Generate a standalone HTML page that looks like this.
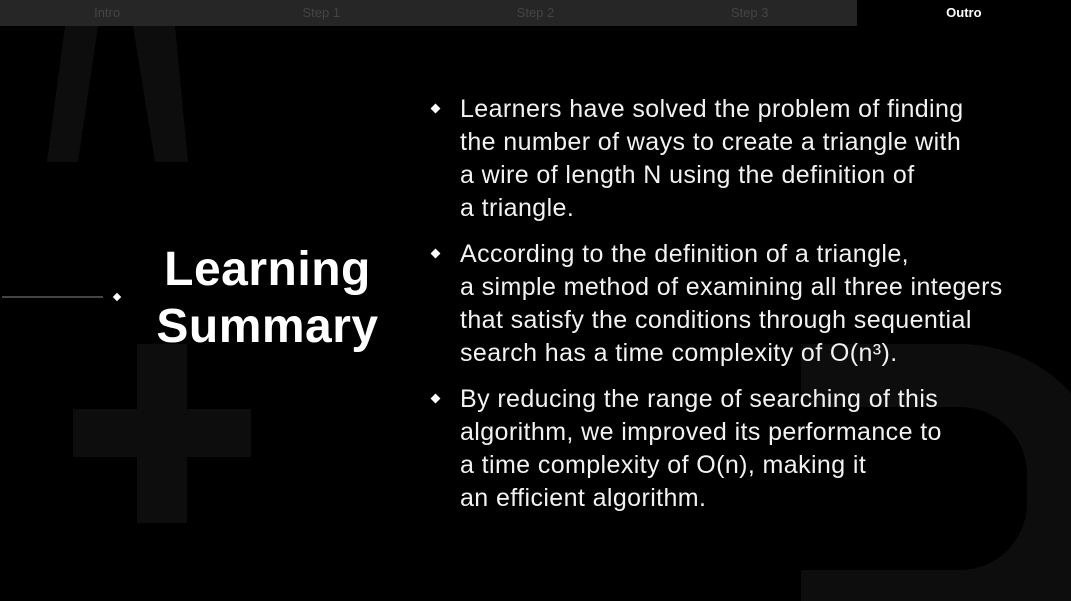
<!DOCTYPE html>
<html><head><meta charset="utf-8"><style>
body{margin:0;width:1071px;height:601px;background:#000;overflow:hidden;position:relative;font-family:"Liberation Sans",sans-serif}
.tabs{position:absolute;left:0;top:0;width:1071px;height:26px;display:flex}
.tab{width:214.2px;height:26px;background:#262626;color:#444;font-size:13px;line-height:26px;text-align:center}
.tab.on{background:#000;color:#fff;font-weight:bold}
.title{position:absolute;left:120px;top:241px;width:295px;text-align:center;color:#fff;font-weight:bold;font-size:48px;line-height:57px;letter-spacing:0.5px}
.list{position:absolute;left:460px;top:93px;color:#f2f2f2;font-size:25px;line-height:33px;letter-spacing:0.4px;width:600px}
.list p{margin:0 0 13px 0;position:relative;white-space:nowrap}
.list p:before{content:"";position:absolute;left:-28px;top:12px;width:7px;height:7px;background:#fff;transform:rotate(45deg)}
</style></head><body>
<svg style="position:absolute;left:0;top:0" width="1071" height="601">
<polygon points="65,26 98,26 78,162 47,162" fill="#0d0d0d"/>
<polygon points="133,26 175,26 188,162 155,162" fill="#0d0d0d"/>
<rect x="137" y="344" width="50" height="179" fill="#0d0d0d"/>
<rect x="73" y="409" width="178" height="48" fill="#0d0d0d"/>
<path d="M801,344 H960 A150,150 0 0 1 1110,494 V601 H801 V570 H960 A67,67 0 0 0 1027,503 V474 A67,67 0 0 0 960,407 H801 Z" fill="#0d0d0d"/>
<line x1="2" y1="297" x2="103" y2="297" stroke="#888" stroke-width="1"/>
<rect x="114" y="294" width="6" height="6" fill="#fff" transform="rotate(45 117 297)"/>
</svg>
<div class="tabs"><div class="tab">Intro</div><div class="tab">Step 1</div><div class="tab">Step 2</div><div class="tab">Step 3</div><div class="tab on">Outro</div></div>
<div class="title">Learning<br>Summary</div>
<div class="list">
<p>Learners have solved the problem of finding<br>the number of ways to create a triangle with<br>a wire of length N using the definition of<br>a triangle.</p>
<p>According to the definition of a triangle,<br>a simple method of examining all three integers<br>that satisfy the conditions through sequential<br>search has a time complexity of O(n³).</p>
<p>By reducing the range of searching of this<br>algorithm, we improved its performance to<br>a time complexity of O(n), making it<br>an efficient algorithm.</p>
</div>
</body></html>
